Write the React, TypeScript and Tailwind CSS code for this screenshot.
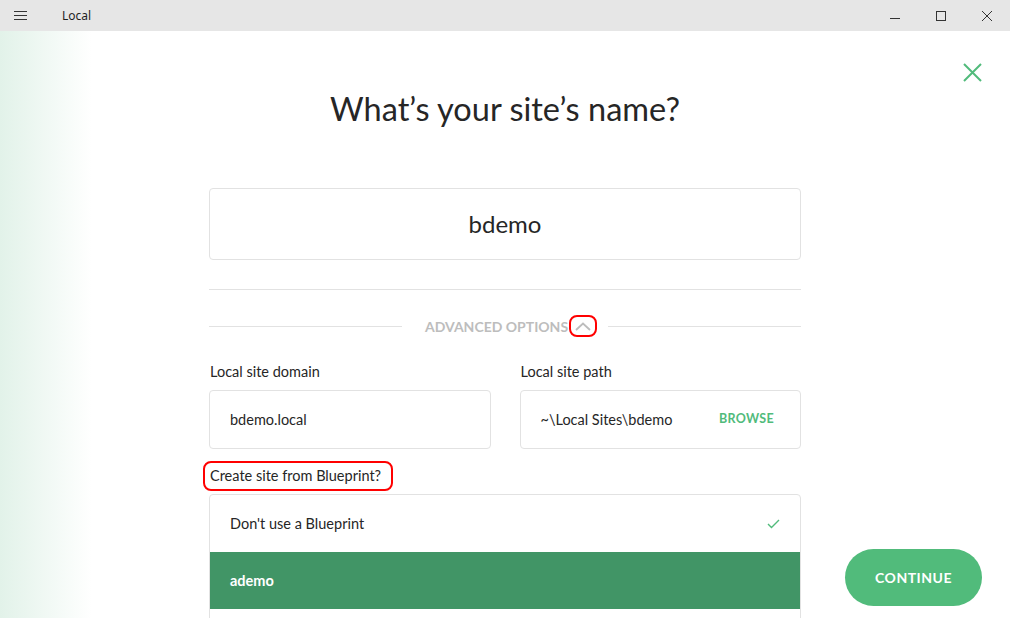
import React from "react";

const font = { fontFamily: "Lato, 'Noto Sans', sans-serif" };

function TitleBar() {
  return (
    <div className="flex h-[31px] items-center bg-[#e6e6e6] text-[#1f1f1f]" style={{ fontFamily: "'Noto Sans', 'Liberation Sans', sans-serif" }}>
      <div className="flex w-[40px] justify-center">
        <svg width="13" height="10" viewBox="0 0 13 10">
          <path d="M0 0.5H13M0 4.5H13M0 8.5H13" stroke="#333" strokeWidth="1" />
        </svg>
      </div>
      <span className="ml-[22px] text-[12px] leading-none">Local</span>
      <div className="ml-auto flex h-full items-center">
        <div className="flex w-[46px] justify-center">
          <svg width="10" height="10" viewBox="0 0 10 10"><path d="M0 7.5H10" stroke="#333" /></svg>
        </div>
        <div className="flex w-[46px] justify-center">
          <svg width="10" height="10" viewBox="0 0 10 10"><rect x="0.5" y="0.5" width="9" height="9" fill="none" stroke="#333" /></svg>
        </div>
        <div className="flex w-[46px] justify-center">
          <svg width="10" height="10" viewBox="0 0 10 10"><path d="M0 0L10 10M10 0L0 10" stroke="#333" /></svg>
        </div>
      </div>
    </div>
  );
}

export default function App() {
  return (
    <div className="relative h-[618px] w-[1010px] overflow-hidden bg-white text-[#262626]" style={font}>
      <TitleBar />
      <div className="relative flex h-[587px]">
        <div className="w-[92px] shrink-0 bg-gradient-to-r from-[#e2f2e9] to-white" />
        <div className="flex-1" />
        {/* close X */}
        <svg className="absolute right-[28px] top-[32px]" width="19" height="19" viewBox="0 0 19 19">
          <path d="M1 1L18 18M18 1L1 18" stroke="#51bb7b" strokeWidth="2" />
        </svg>
      </div>

      <div className="absolute left-0 right-0 top-[31px]">
        <div className="mx-auto w-[592px]">
          <h1 className="pt-[56px] text-center text-[32.5px] leading-[44px] text-[#262626]">What’s your site’s name?</h1>

          <div className="mt-[57px] flex h-[72px] items-center justify-center rounded-[4px] border border-[#e2e2e2] text-[24px]">
            bdemo
          </div>

          <div className="mt-[29px] h-px bg-[#e2e2e2]" />

          <div className="mt-[25px] flex h-[22px] items-center">
            <div className="h-px flex-1 bg-[#e2e2e2]" />
            <div className="flex items-center pl-[23px] pr-[12px]">
              <span className="text-[14px] font-bold text-[#bdbdbd]">ADVANCED OPTIONS</span>
              <span className="relative ml-[2px] flex h-[20px] w-[26px] items-center justify-center">
                <svg width="16" height="9" viewBox="0 0 16 9"><path d="M1 8L8 1.5L15 8" fill="none" stroke="#bdbdbd" strokeWidth="1.8" /></svg>
                <span className="absolute left-[-1px] top-[-1px] h-[22px] w-[28px] rounded-[8px] border-2 border-[#ff0000]" />
              </span>
            </div>
            <div className="h-px flex-1 bg-[#e2e2e2]" />
          </div>

          <div className="mt-[26px] grid grid-cols-2 gap-[29px]">
            <div>
              <div className="pl-[1px] text-[14.5px] leading-[18px]">Local site domain</div>
              <div className="mt-[9px] flex h-[59px] items-center rounded-[4px] border border-[#e2e2e2] px-[20px] text-[14.5px]">
                bdemo.local
              </div>
            </div>
            <div>
              <div className="pl-[1px] text-[14.5px] leading-[18px]">Local site path</div>
              <div className="mt-[9px] flex h-[59px] items-center justify-between rounded-[4px] border border-[#e2e2e2] pl-[20px] pr-[26px] text-[14.5px]">
                <span>~\Local Sites\bdemo</span>
                <span className="text-[12.5px] font-bold tracking-[0.3px] text-[#51bb7b]">BROWSE</span>
              </div>
            </div>
          </div>

          <div className="mt-[9px] flex">
            <div className="relative pl-[1px] text-[14.5px] leading-[36px]">
              Create site from Blueprint?
              <span className="absolute left-[-6px] right-[-12px] top-[3px] h-[30px] rounded-[8px] border-2 border-[#ff0000]" />
            </div>
          </div>

          <div className="overflow-hidden rounded-t-[4px] border border-[#e2e2e2] text-[14.5px]">
            <div className="flex h-[57px] items-center justify-between pl-[20px] pr-[20px]">
              <span>Don't use a Blueprint</span>
              <svg width="13" height="10" viewBox="0 0 13 10"><path d="M1 5L4.5 8.5L12 1" fill="none" stroke="#51bb7b" strokeWidth="1.4" /></svg>
            </div>
            <div className="flex h-[57px] items-center bg-[#419566] pl-[20px] font-bold text-white">ademo</div>
            <div className="h-[40px]" />
          </div>
        </div>
      </div>

      <button className="absolute left-[845px] top-[549px] flex h-[57px] w-[137px] items-center justify-center rounded-full bg-[#51bb7b] text-[14px] font-bold tracking-[0.5px] text-white">
        CONTINUE
      </button>
    </div>
  );
}
